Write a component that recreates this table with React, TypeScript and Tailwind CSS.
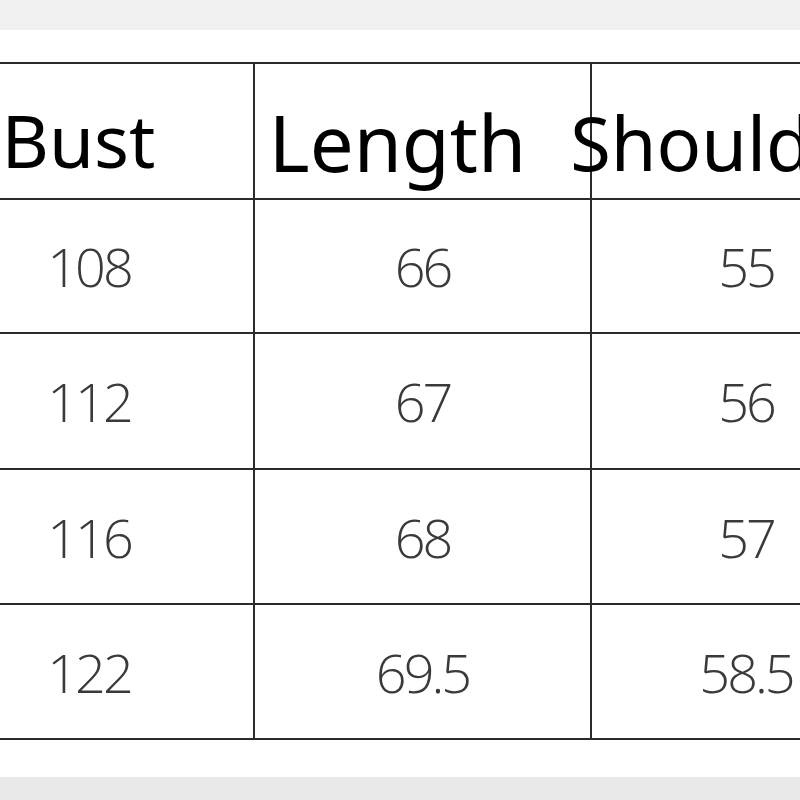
import React from "react";

const rows = [
  ["108", "66", "55", "h-[134px]"],
  ["112", "67", "56", "h-[136px]"],
  ["116", "68", "57", "h-[135px]"],
  ["122", "69.5", "58.5", "h-[135px]"],
];

const numCls =
  "flex items-center justify-center text-[54px] leading-none font-light tracking-[-3px] text-[#3a3a3a] whitespace-nowrap";

export default function App() {
  return (
    <div className="w-[800px] h-[800px] bg-white overflow-hidden flex flex-col">
      <div className="h-[30px] shrink-0 bg-[#f0f0f0]" />
      <div className="h-[32px] shrink-0" />
      <div
        className="ml-[-75px] w-[1000px] shrink-0 flex flex-col border-t-2 border-[#2b2b2b]"
        style={{ fontFamily: '"Open Sans", "Noto Sans", sans-serif' }}
      >
        <div
          className="flex h-[136px] border-b-2 border-[#2b2b2b] text-black"
          style={{ fontFamily: '"Noto Sans", "Open Sans", sans-serif' }}
        >
          <div className="w-[330px] shrink-0 border-r-2 border-[#2b2b2b] flex items-center justify-center pr-[21px] pt-[16px] text-[73px] leading-none whitespace-nowrap">
            Bust
          </div>
          <div className="w-[337px] shrink-0 border-r-2 border-[#2b2b2b] flex items-center justify-center pr-[50px] pt-[22px] text-[78px] leading-none whitespace-nowrap">
            Length
          </div>
          <div className="w-[308px] shrink-0 flex items-center justify-center pr-[38px] pt-[24px] text-[74px] leading-none whitespace-nowrap">
            Shoulder
          </div>
        </div>
        {rows.map(([a, b, c, h]) => (
          <div key={a} className={`flex ${h} border-b-2 border-[#2b2b2b]`}>
            <div className={`w-[330px] shrink-0 border-r-2 border-[#2b2b2b] ${numCls}`}>{a}</div>
            <div className={`w-[337px] shrink-0 border-r-2 border-[#2b2b2b] ${numCls}`}>{b}</div>
            <div className={`w-[308px] shrink-0 ${numCls}`}>{c}</div>
          </div>
        ))}
      </div>
      <div className="flex-1" />
      <div className="h-[23px] shrink-0 bg-[#e9e9e9]" />
    </div>
  );
}
